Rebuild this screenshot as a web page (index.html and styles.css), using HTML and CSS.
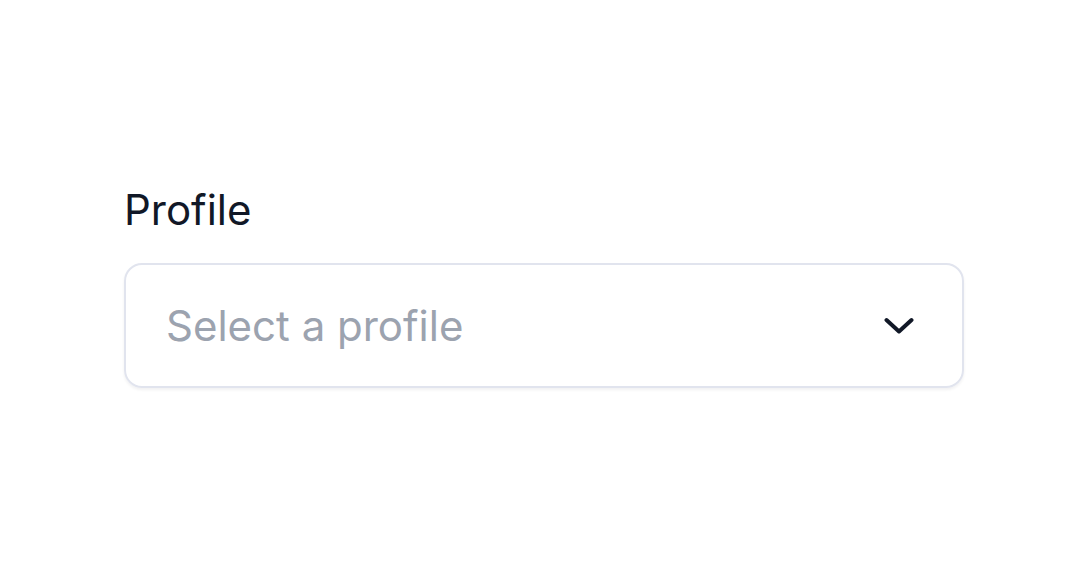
FILE: index.html
```html
<!DOCTYPE html>
<html>
<head>
<meta charset="utf-8">
<link rel="stylesheet" href="styles.css">
</head>
<body>
<div class="page">
  <div class="field">
    <label class="label">Profile</label>
    <div class="select">
      <span class="placeholder">Select a profile</span>
      <svg class="chevron" viewBox="0 0 30 18" width="30" height="18">
        <path d="M2.5 3 L15 14.5 L27.5 3" fill="none" stroke="#111827" stroke-width="4" stroke-linecap="round" stroke-linejoin="round"/>
      </svg>
    </div>
  </div>
</div>
</body>
</html>
```
FILE: styles.css
```css
html, body {
  margin: 0;
  padding: 0;
  background: #ffffff;
}
.page {
  width: 1088px;
  height: 576px;
  box-sizing: border-box;
  padding: 185px 124px 0;
  font-family: Inter, "Noto Sans", sans-serif;
}
.field {
  width: 840px;
  display: flex;
  flex-direction: column;
  gap: 28px;
}
.label {
  font-size: 42px;
  line-height: 50px;
  color: #111827;
}
.select {
  box-sizing: border-box;
  height: 125px;
  border: 2.5px solid #e1e4ee;
  border-radius: 18px;
  box-shadow: 0 2px 3px rgba(17, 24, 39, 0.06);
  display: flex;
  align-items: center;
  justify-content: space-between;
  padding: 0 48px 0 40px;
}
.placeholder {
  font-size: 42px;
  color: #9ca3af;
}
.chevron {
  display: block;
}
```
